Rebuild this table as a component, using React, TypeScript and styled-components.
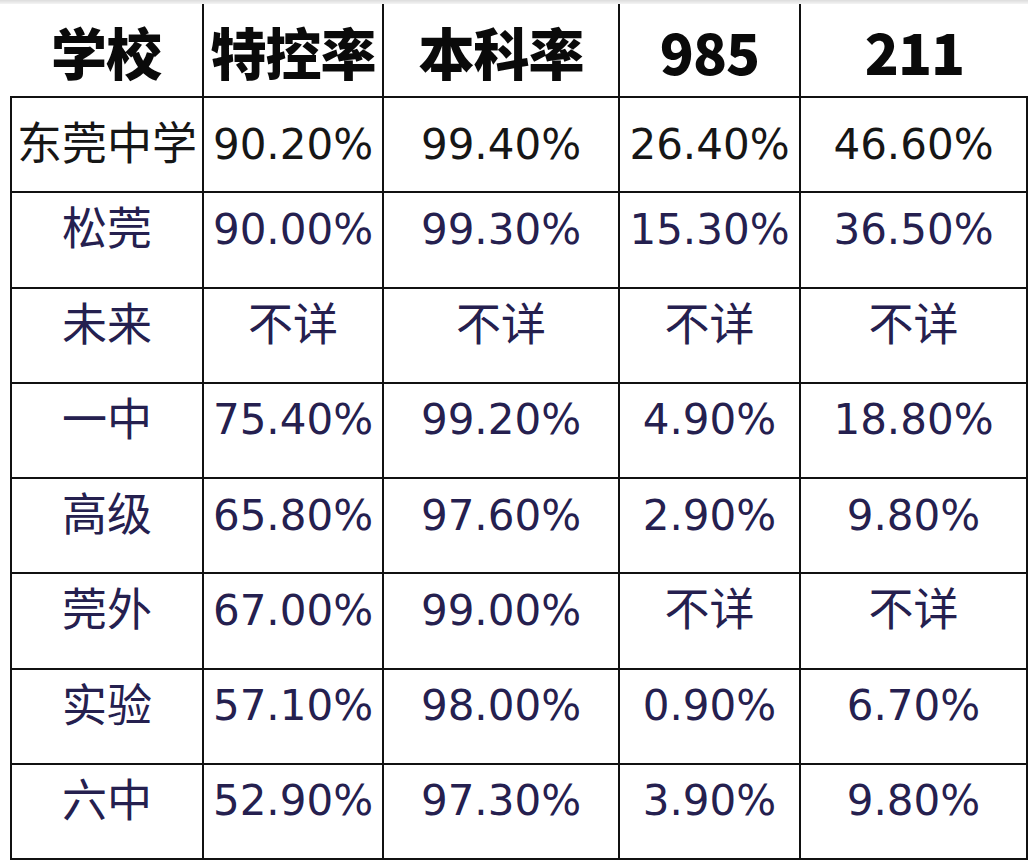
import React from "react"
import styled, { createGlobalStyle } from "styled-components"

const GlobalStyle = createGlobalStyle`
  html, body {
    margin: 0;
    padding: 0;
    background: #ffffff;
  }
`

type Row = { school: string; vals: string[] }

const head = ["学校", "特控率", "本科率", "985", "211"]

const rows: Row[] = [
  { school: "东莞中学", vals: ["90.20%", "99.40%", "26.40%", "46.60%"] },
  { school: "松莞", vals: ["90.00%", "99.30%", "15.30%", "36.50%"] },
  { school: "未来", vals: ["不详", "不详", "不详", "不详"] },
  { school: "一中", vals: ["75.40%", "99.20%", "4.90%", "18.80%"] },
  { school: "高级", vals: ["65.80%", "97.60%", "2.90%", "9.80%"] },
  { school: "莞外", vals: ["67.00%", "99.00%", "不详", "不详"] },
  { school: "实验", vals: ["57.10%", "98.00%", "0.90%", "6.70%"] },
  { school: "六中", vals: ["52.90%", "97.30%", "3.90%", "9.80%"] },
]

const Page = styled.div`
  width: 1028px;
  height: 862px;
  background: #fff;
  overflow: hidden;
`

const TopShade = styled.div`
  height: 4px;
  background: linear-gradient(#dcdcdc, #f4f4f4);
`

const Grid = styled.div`
  margin-left: 10px;
  width: 1018px;
  display: grid;
  grid-template-columns: 194px 180px 236px 181px 227px;
  grid-template-rows: 94px repeat(8, 95.25px);
`

const HeadCell = styled.div<{ $last?: boolean }>`
  box-sizing: border-box;
  display: flex;
  align-items: center;
  justify-content: center;
  border-bottom: 2px solid #111;
  border-right: ${(p) => (p.$last ? "none" : "2px solid #111")};
  font-family: "Noto Sans CJK SC", "Liberation Sans", sans-serif;
  font-weight: 900;
  font-size: 56px;
  color: #0a0a0a;
  letter-spacing: -1px;
`

const BodyCell = styled.div<{ $first?: boolean; $top?: boolean }>`
  box-sizing: border-box;
  display: flex;
  align-items: center;
  justify-content: center;
  border-bottom: 2px solid #111;
  border-right: 2px solid #111;
  border-left: ${(p) => (p.$first ? "2px solid #111" : "none")};
  padding-bottom: ${(p) => (p.$top ? "0" : "20px")};
  color: ${(p) => (p.$top ? "#161616" : "#25204f")};
  white-space: nowrap;
`

const Text = styled.span<{ $cjk?: boolean }>`
  font-family: "DejaVu Sans", "Noto Sans CJK SC", sans-serif;
  font-size: ${(p) => (p.$cjk ? "45px" : "42px")};
  font-weight: 400;
  line-height: 1;
`

const isCjk = (s: string) => /[\u4e00-\u9fff]/.test(s)

const App: React.FC = () => {
  return (
    <Page>
      <GlobalStyle />
      <TopShade />
      <Grid>
        {head.map((h, i) => (
          <HeadCell key={h} $last={i === head.length - 1}>
            {h}
          </HeadCell>
        ))}
        {rows.map((r, ri) => (
          <React.Fragment key={r.school}>
            <BodyCell $first $top={ri === 0}>
              <Text $cjk>{r.school}</Text>
            </BodyCell>
            {r.vals.map((v, vi) => (
              <BodyCell key={vi} $top={ri === 0}>
                <Text $cjk={isCjk(v)}>{v}</Text>
              </BodyCell>
            ))}
          </React.Fragment>
        ))}
      </Grid>
    </Page>
  )
}

export default App
